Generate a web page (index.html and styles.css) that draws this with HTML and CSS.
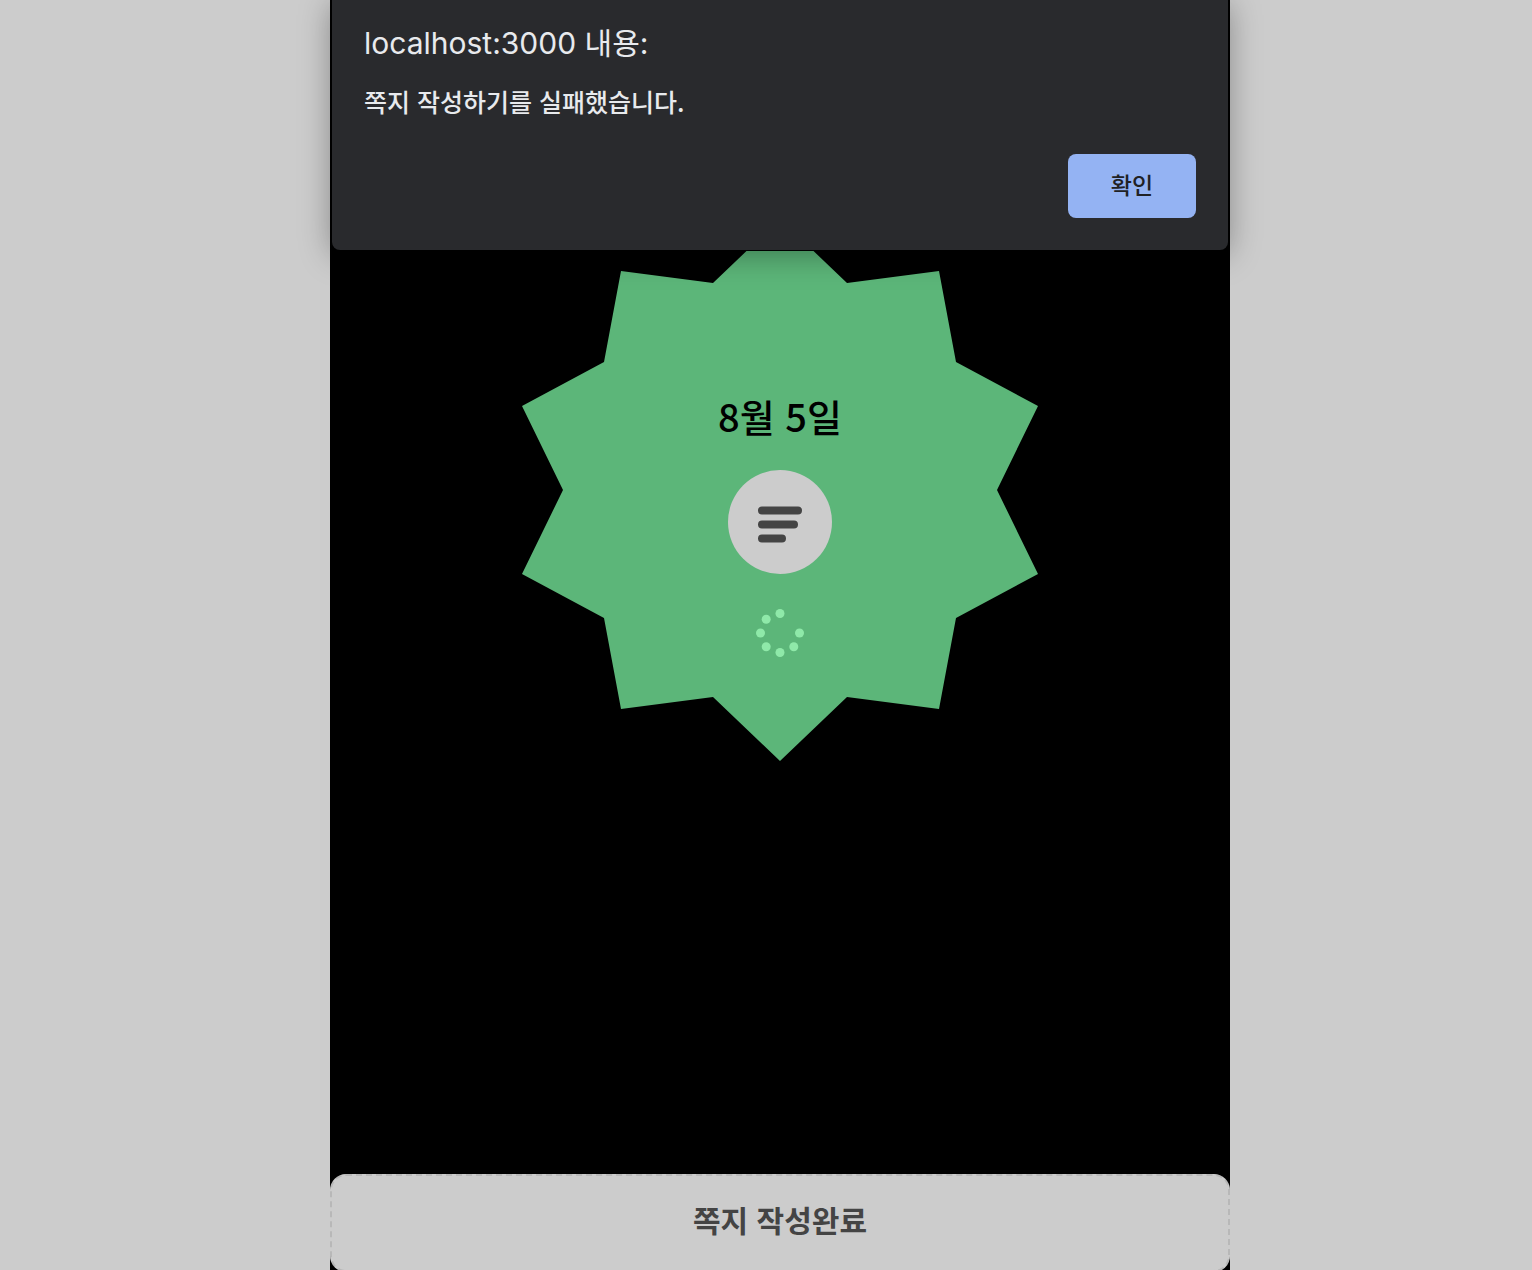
FILE: index.html
```html
<!DOCTYPE html>
<html lang="ko">
<head>
  <meta charset="UTF-8" />
  <meta name="viewport" content="width=device-width, initial-scale=1.0" />
  <title>쪽지 작성</title>
  <link rel="stylesheet" href="styles.css">
</head>
<body>

<div class="app">
  <main class="note">
    <svg class="note-shape" viewBox="-271 -271 542 542" aria-hidden="true">
      <polygon points="0,-271 67,-207 159,-219 176,-128 258,-84 217,0 258,84 176,128 159,219 67,207 0,271 -67,207 -159,219 -176,128 -258,84 -217,0 -258,-84 -176,-128 -159,-219 -67,-207" />
    </svg>
    <div class="note-content">
      <h1 class="date">8월 5일</h1>
      <button class="write-btn" type="button" aria-label="쪽지 쓰기">
        <svg viewBox="0 0 104 104">
          <path d="M34 40.5H70M34 54.5H66M34 68.5H54" />
        </svg>
      </button>
      <svg class="spinner" viewBox="-24 -24 48 48" aria-hidden="true">
        <circle cx="0" cy="-19.5" r="4.5" />
        <circle cx="19.5" cy="0" r="4.5" />
        <circle cx="13.8" cy="13.8" r="4.5" />
        <circle cx="0" cy="19.5" r="4.5" />
        <circle cx="-13.8" cy="13.8" r="4.5" />
        <circle cx="-19.5" cy="0" r="4.5" />
        <circle cx="-13.8" cy="-13.8" r="4.5" />
      </svg>
    </div>
  </main>

  <button class="submit-btn" type="submit">쪽지 작성완료</button>

  <div class="alert" role="alertdialog" aria-labelledby="alert-title" aria-describedby="alert-text">
    <h2 id="alert-title">localhost:3000 내용:</h2>
    <p id="alert-text">쪽지 작성하기를 실패했습니다.</p>
    <button class="confirm-btn" type="button">확인</button>
  </div>
</div>

</body>
</html>
```
FILE: styles.css
```css
* { margin: 0; padding: 0; box-sizing: border-box; }

body {
  height: 100vh;
  padding-left: 28px;
  overflow: hidden;
  background: #ccc;
  font-family: "Noto Sans CJK KR", sans-serif;
}

button {
  border: none;
  font-family: inherit;
  cursor: pointer;
}

.app {
  position: relative;
  display: flex;
  flex-direction: column;
  width: 100%;
  max-width: 900px;
  height: 100%;
  margin: 0 auto;
  background: #000;
}

.note {
  display: grid;
  justify-items: center;
  padding-top: 219px;
}

.note-shape,
.note-content {
  grid-area: 1 / 1;
}

.note-shape {
  width: 100%;
  max-width: 542px;
  fill: #5cb679;
}

.note-content {
  display: flex;
  flex-direction: column;
  align-items: center;
  padding-top: 169px;
}

.date {
  font-size: 38px;
  font-weight: 500;
  line-height: 56px;
  margin-bottom: 26px;
}

.write-btn {
  width: 104px;
  height: 104px;
  margin-bottom: 35px;
  border-radius: 50%;
  background: #ccc;
}

.write-btn svg {
  display: block;
  fill: none;
  stroke: #444;
  stroke-width: 8;
  stroke-linecap: round;
}

.spinner {
  width: 48px;
  fill: #8fe9a9;
}

.submit-btn {
  flex-shrink: 0;
  height: 98px;
  margin: auto 0 -2px;
  padding-bottom: 8px;
  border: 2px dashed #b8b8b8;
  border-radius: 16px;
  background: #ccc;
  color: #444;
  font-size: 30px;
  font-weight: 700;
}

/* browser alert */
.alert {
  position: absolute;
  top: 0;
  left: 2px;
  right: 2px;
  display: flex;
  flex-direction: column;
  padding: 19px 32px 32px;
  border-radius: 0 0 8px 8px;
  background: #292a2d;
  color: #e8eaed;
  box-shadow: 0 0 0 1px #000, 0 4px 32px rgba(0, 0, 0, 0.36);
}

.alert h2 {
  font-family: Inter, "Noto Sans CJK KR", sans-serif;
  font-size: 30px;
  font-weight: 400;
  line-height: 48px;
}

.alert p {
  margin: 14px 0 33px;
  font-size: 25px;
  font-weight: 500;
  line-height: 40px;
}

.confirm-btn {
  align-self: flex-end;
  width: 128px;
  height: 64px;
  padding-bottom: 5px;
  border-radius: 8px;
  background: #94b3f3;
  color: #202124;
  font-size: 23px;
  font-weight: 500;
}
```
